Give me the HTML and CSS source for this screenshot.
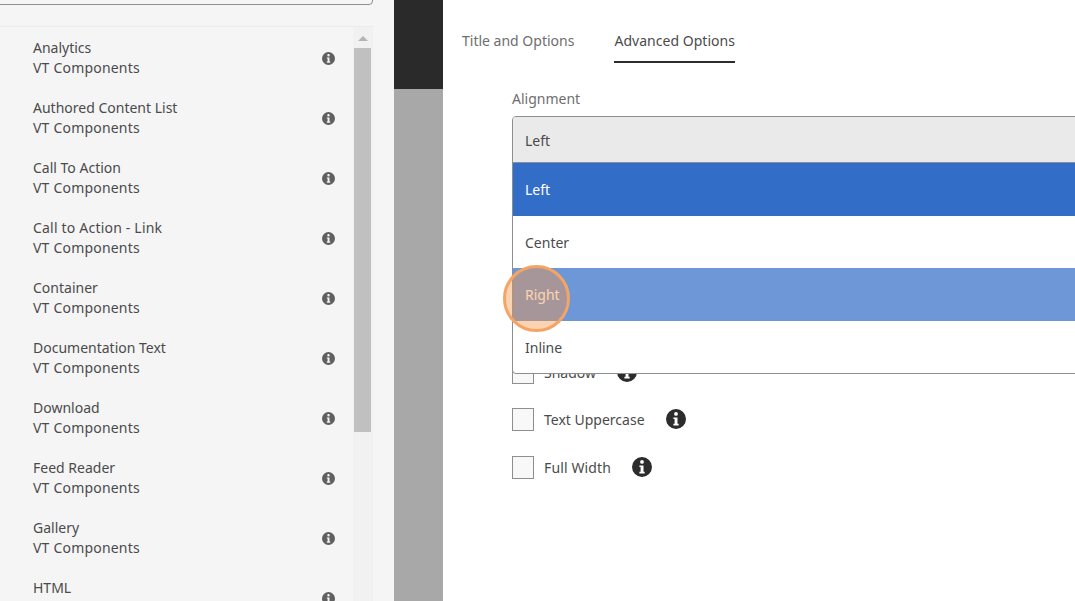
FILE: index.html
```html
<!DOCTYPE html>
<html lang="en">
<head>
<meta charset="utf-8">
<title>Component dialog</title>
<link rel="stylesheet" href="styles.css">
<svg class="defs" width="0" height="0" aria-hidden="true">
<symbol id="info" viewBox="0 0 20 20">
<path fill-rule="evenodd" d="M10 0a10 10 0 1 0 0 20a10 10 0 0 0 0-20zM10 3a1.9 1.9 0 1 1 0 3.8a1.9 1.9 0 0 1 0-3.8zM7.4 8.4h4.1v6.3h1.2v1.7H7.4v-1.7h1.2v-4.6H7.4z"/>
</symbol>
</svg>
</head>
<body>
<div class="app">
  <aside class="sidebar">
    <div class="search"></div>
    <div class="list-wrap">
      <ul class="list">
        <li class="item"><div><div>Analytics</div><div class="group">VT Components</div></div><svg class="info-s"><use href="#info"/></svg></li>
        <li class="item"><div><div>Authored Content List</div><div class="group">VT Components</div></div><svg class="info-s"><use href="#info"/></svg></li>
        <li class="item"><div><div>Call To Action</div><div class="group">VT Components</div></div><svg class="info-s"><use href="#info"/></svg></li>
        <li class="item"><div><div class="title-wide">Call to Action - Link</div><div class="group">VT Components</div></div><svg class="info-s"><use href="#info"/></svg></li>
        <li class="item"><div><div>Container</div><div class="group">VT Components</div></div><svg class="info-s"><use href="#info"/></svg></li>
        <li class="item"><div><div>Documentation Text</div><div class="group">VT Components</div></div><svg class="info-s"><use href="#info"/></svg></li>
        <li class="item"><div><div>Download</div><div class="group">VT Components</div></div><svg class="info-s"><use href="#info"/></svg></li>
        <li class="item"><div><div>Feed Reader</div><div class="group">VT Components</div></div><svg class="info-s"><use href="#info"/></svg></li>
        <li class="item"><div><div>Gallery</div><div class="group">VT Components</div></div><svg class="info-s"><use href="#info"/></svg></li>
        <li class="item"><div><div>HTML</div><div class="group">VT Components</div></div><svg class="info-s"><use href="#info"/></svg></li>
      </ul>
      <div class="scrollbar">
        <div class="arrow"></div>
        <div class="thumb"></div>
      </div>
    </div>
  </aside>
  <div class="backdrop">
    <div class="backdrop-top"></div>
  </div>
  <main class="dialog">
    <nav class="tabs">
      <span class="tab">Title and Options</span>
      <span class="tab tab-active">Advanced Options</span>
    </nav>
    <div class="form">
      <div class="field-label">Alignment</div>
      <div class="select-space"></div>
      <div class="check-row check-row-first"><span class="box"></span><span class="check-label">Shadow</span><svg class="info-l"><use href="#info"/></svg></div>
      <div class="check-row"><span class="box"></span><span class="check-label">Text Uppercase</span><svg class="info-l"><use href="#info"/></svg></div>
      <div class="check-row"><span class="box"></span><span class="check-label check-label-wide">Full Width</span><svg class="info-l"><use href="#info"/></svg></div>
    </div>
    <div class="dropdown">
      <div class="trigger">Left</div>
      <div class="option option-selected">Left</div>
      <div class="option">Center</div>
      <div class="option option-hover">Right</div>
      <div class="option">Inline</div>
    </div>
    <div class="pointer"></div>
  </main>
</div>
</body>
</html>
```

FILE: styles.css
```css
* { box-sizing: border-box; }
html, body { margin: 0; padding: 0; height: 100%; overflow: hidden; }
body { font-family: "Noto Sans", "Open Sans", sans-serif; font-size: 14px; color: #4b4b4b; background: #fff; }
.defs { position: absolute; }
.app { display: flex; width: 1075px; height: 601px; overflow: hidden; }

.sidebar { width: 394px; flex: none; background: #f5f5f5; overflow: hidden; }
.search { width: 382px; height: 30px; margin: -25px 0 0 -9px; border: 1px solid #8e8e8e; border-radius: 4px; background: #f5f5f5; }
.list-wrap { display: flex; width: 373px; height: 580px; margin-top: 21px; border-top: 1px solid #ececec; overflow: hidden; }
.list { flex: 1; list-style: none; margin: 0; padding: 0 0 0 33px; }
.item { display: flex; justify-content: space-between; align-items: center; height: 60px; padding: 2px 18px 0 0; line-height: 20px; color: #4b4b4b; }
.group { letter-spacing: 0.2px; }
.title-wide { letter-spacing: 0.2px; }
.info-s { width: 13px; height: 13px; fill: #606060; flex: none; margin-top: 1px; }

.scrollbar { width: 20px; flex: none; padding: 0 0 0 1px; background: #f1f1f1; display: flex; flex-direction: column; align-items: flex-start; }
.arrow { width: 0; height: 0; margin: 9px 0 7px 4px; border-left: 5px solid transparent; border-right: 5px solid transparent; border-bottom: 5px solid #b4b4b4; }
.thumb { width: 17px; height: 384px; background: #c0c0c0; }

.backdrop { width: 49px; flex: none; background: #a8a8a8; }
.backdrop-top { height: 89px; background: #2a2a2a; }

.dialog { flex: 1; position: relative; background: #fff; overflow: hidden; }
.tabs { display: flex; gap: 40px; height: 63px; padding: 31px 0 0 19px; }
.tab { color: #6e6e6e; height: 32px; line-height: 20px; }
.tab-active { color: #4b4b4b; border-bottom: 2px solid #2c2c2c; letter-spacing: 0.03px; }
.form { padding: 26px 0 0 69px; }
.field-label { height: 20px; line-height: 20px; color: #6e6e6e; }
.select-space { height: 251px; }
.check-row { display: flex; align-items: center; height: 24px; margin-bottom: 24px; }
.check-row-first { margin-bottom: 23px; }
.box { width: 22px; height: 23px; border: 1px solid #8e8e8e; background: #f8f8f8; flex: none; }
.check-label { margin-left: 10px; }
.check-label-wide { letter-spacing: 0.12px; }
.info-l { width: 20px; height: 20px; fill: #2c2c2c; margin-left: 21px; flex: none; }

.dropdown { position: absolute; left: 69px; top: 116px; width: 700px; border: 1px solid #8e8e8e; border-radius: 4px; background: #fff; overflow: hidden; }
.trigger { height: 46px; line-height: 47px; padding-left: 12px; background: #eaeaea; border-bottom: 1px solid #8e8e8e; }
.option { height: 52.5px; line-height: 54px; padding-left: 12px; color: #4b4b4b; }
.option-selected { background: #326ec8; color: #fff; }
.option-hover { background: #6d97d6; color: #fff; }
.pointer { position: absolute; left: 60px; top: 265px; width: 67px; height: 67px; border-radius: 50%; background: rgba(248, 150, 70, 0.42); border: 3px solid #f4a566; }
```
